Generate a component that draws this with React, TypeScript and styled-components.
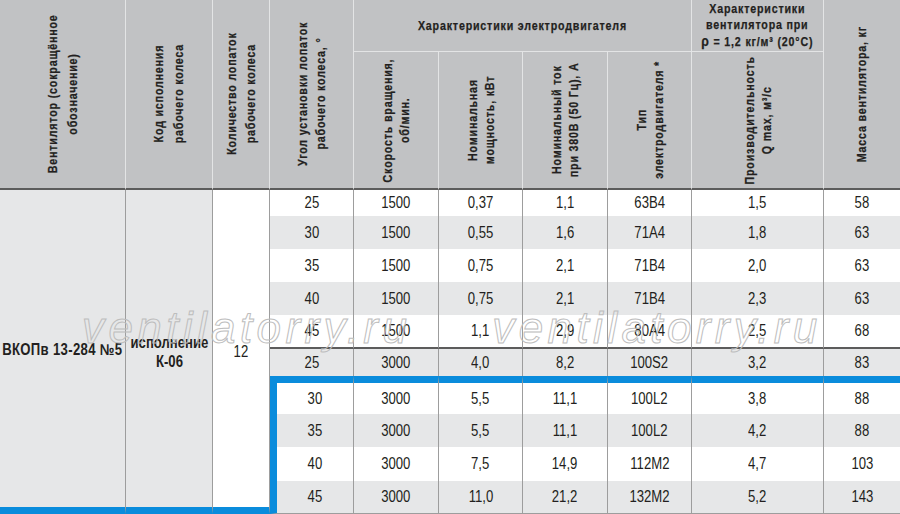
import React from "react"
import styled, { createGlobalStyle } from "styled-components"

// no condensed face is installed, so Liberation Sans is narrowed along the line direction
const FONT = `"Liberation Sans", Arial, sans-serif`
const NARROW = 0.82
const BLUE = "#0a8cdc"
const COLUMNS = [126, 87, 57, 84, 85, 84, 85, 84, 132, 76]
const ROW_HEIGHTS = [26, 33, 33, 33, 34, 27, 38, 33, 34, 33]

const GlobalStyle = createGlobalStyle`
  html, body {
    margin: 0;
    padding: 0;
    background: #fff;
  }
`

type Tone = "white" | "gray"

interface Row {
  angle: string
  speed: string
  power: string
  current: string
  motor: string
  flow: string
  mass: string
}

const rows: Row[] = [
  { angle: "25", speed: "1500", power: "0,37", current: "1,1", motor: "63B4", flow: "1,5", mass: "58" },
  { angle: "30", speed: "1500", power: "0,55", current: "1,6", motor: "71A4", flow: "1,8", mass: "63" },
  { angle: "35", speed: "1500", power: "0,75", current: "2,1", motor: "71B4", flow: "2,0", mass: "63" },
  { angle: "40", speed: "1500", power: "0,75", current: "2,1", motor: "71B4", flow: "2,3", mass: "63" },
  { angle: "45", speed: "1500", power: "1,1", current: "2,9", motor: "80A4", flow: "2,5", mass: "68" },
  { angle: "25", speed: "3000", power: "4,0", current: "8,2", motor: "100S2", flow: "3,2", mass: "83" },
  { angle: "30", speed: "3000", power: "5,5", current: "11,1", motor: "100L2", flow: "3,8", mass: "88" },
  { angle: "35", speed: "3000", power: "5,5", current: "11,1", motor: "100L2", flow: "4,2", mass: "88" },
  { angle: "40", speed: "3000", power: "7,5", current: "14,9", motor: "112M2", flow: "4,7", mass: "103" },
  { angle: "45", speed: "3000", power: "11,0", current: "21,2", motor: "132M2", flow: "5,2", mass: "143" }
]

// a dark rule closes the 1500 rpm block; the 3000 rpm tail is framed in blue
const SPLIT_AFTER = 4
const FRAME_FROM = 6

const Sheet = styled.div`
  position: relative;
  width: 900px;
  height: 514px;
  overflow: hidden;
  font-family: ${FONT};
  color: #231f20;
`

const Grid = styled.div`
  display: grid;
  grid-template-columns: ${COLUMNS.map((w) => `${w}px`).join(" ")};
  grid-template-rows: 52px 138px ${ROW_HEIGHTS.map((h) => `${h}px`).join(" ")};
`

const HeadCell = styled.div<{ $col: number; $row: number; $colSpan?: number; $rowSpan?: number; $group?: boolean }>`
  grid-column: ${(p) => p.$col} / span ${(p) => p.$colSpan ?? 1};
  grid-row: ${(p) => p.$row} / span ${(p) => p.$rowSpan ?? 1};
  box-sizing: border-box;
  display: flex;
  align-items: center;
  justify-content: center;
  background: #c1c2c4;
  border-right: ${(p) => (p.$col + (p.$colSpan ?? 1) > COLUMNS.length ? "none" : "1px solid #e3e4e5")};
  border-bottom: ${(p) => (p.$group ? "1px solid #e3e4e5" : "2px solid #5c5c5c")};
  font-weight: bold;
  font-size: 13px;
  letter-spacing: 1px;
  -webkit-text-stroke: 0.25px #231f20;
`

const GroupTitle = styled.div`
  text-align: center;
  line-height: 16px;
  white-space: nowrap;
  transform: scaleX(${NARROW});
`

const Rho = styled.span`
  font-size: 15px;
`

const VerticalLabel = styled.div<{ $lh: number }>`
  writing-mode: vertical-rl;
  transform: rotate(180deg) scaleY(${NARROW});
  white-space: nowrap;
  text-align: center;
  line-height: ${(p) => p.$lh}px;
`

const MergedCell = styled.div<{ $col: number; $tone: Tone; $bold?: boolean; $shift: number }>`
  grid-column: ${(p) => p.$col};
  grid-row: 3 / span ${ROW_HEIGHTS.length};
  box-sizing: border-box;
  display: flex;
  align-items: center;
  justify-content: center;
  background: ${(p) => (p.$tone === "gray" ? "#e6e7e8" : "#fff")};
  border-right: 1px solid #9d9d9d;
  border-bottom: 7px solid ${BLUE};
  padding-top: ${(p) => p.$shift}px;
  font-size: 16px;
  font-weight: ${(p) => (p.$bold ? "bold" : "normal")};
  line-height: 19px;
`

const Narrow = styled.span<{ $spacing?: number }>`
  display: inline-block;
  transform: scaleX(${NARROW});
  white-space: nowrap;
  text-align: center;
  letter-spacing: ${(p) => p.$spacing ?? 0}px;
`

const DataCell = styled.div<{ $tone: Tone; $last: boolean; $split: boolean; $frameTop: boolean; $frameLeft: boolean; $bottom: boolean }>`
  box-sizing: border-box;
  display: flex;
  align-items: center;
  justify-content: center;
  background: ${(p) => (p.$tone === "gray" ? "#e6e7e8" : "#fff")};
  border-right: ${(p) => (p.$last ? "none" : "1px solid #9d9d9d")};
  border-top: ${(p) => (p.$frameTop ? `7px solid ${BLUE}` : "none")};
  border-left: ${(p) => (p.$frameLeft ? `7px solid ${BLUE}` : "none")};
  border-bottom: ${(p) => (p.$split ? "2px solid #5c5c5c" : p.$bottom ? "1px solid #9d9d9d" : "none")};
  font-size: 16px;
`

const Watermark = styled.div`
  position: absolute;
  left: 0;
  right: 0;
  top: 303px;
  display: flex;
  gap: 81px;
  padding-left: 82px;
  pointer-events: none;
`

const WatermarkText = styled.span`
  font-style: italic;
  font-size: 44px;
  letter-spacing: 4.4px;
  color: transparent;
  -webkit-text-stroke: 1px #bdbdbd;
  white-space: nowrap;
`

const headLabels: { col: number; lines: string[]; lh: number }[] = [
  { col: 1, lines: ["Вентилятор (сокращённое", "обозначение)"], lh: 20 },
  { col: 2, lines: ["Код исполнения", "рабочего колеса"], lh: 20 },
  { col: 3, lines: ["Количество лопаток", "рабочего колеса"], lh: 19 },
  { col: 4, lines: ["Угол установки лопаток", "рабочего колеса, °"], lh: 18 }
]

const subLabels: { col: number; lines: string[] }[] = [
  { col: 5, lines: ["Скорость вращения,", "об/мин."] },
  { col: 6, lines: ["Номинальная", "мощность, кВт"] },
  { col: 7, lines: ["Номинальный ток", "при 380В (50 Гц), А"] },
  { col: 8, lines: ["Тип", "электродвигателя *"] },
  { col: 9, lines: ["Производительность", "Q max, м³/с"] }
]

const renderLines = (lines: string[]) =>
  lines.map((line, i) => (
    <React.Fragment key={i}>
      {i > 0 && <br />}
      {line}
    </React.Fragment>
  ))

export default function App() {
  return (
    <Sheet>
      <GlobalStyle />
      <Grid>
        {headLabels.map((h) => (
          <HeadCell key={h.col} $col={h.col} $row={1} $rowSpan={2}>
            <VerticalLabel $lh={h.lh}>{renderLines(h.lines)}</VerticalLabel>
          </HeadCell>
        ))}
        <HeadCell $col={5} $row={1} $colSpan={4} $group>
          <GroupTitle>Характеристики электродвигателя</GroupTitle>
        </HeadCell>
        <HeadCell $col={9} $row={1} $group>
          <GroupTitle>
            Характеристики
            <br />
            вентилятора при
            <br />
            <Rho>ρ</Rho> = 1,2 кг/м³ (20°С)
          </GroupTitle>
        </HeadCell>
        <HeadCell $col={10} $row={1} $rowSpan={2}>
          <VerticalLabel $lh={18}>Масса вентилятора, кг</VerticalLabel>
        </HeadCell>
        {subLabels.map((s) => (
          <HeadCell key={s.col} $col={s.col} $row={2}>
            <VerticalLabel $lh={17}>{renderLines(s.lines)}</VerticalLabel>
          </HeadCell>
        ))}

        <MergedCell $col={1} $tone="gray" $bold $shift={2}>
          <Narrow $spacing={0.4}>ВКОПв 13-284 №5</Narrow>
        </MergedCell>
        <MergedCell $col={2} $tone="gray" $bold $shift={6}>
          <Narrow>
            исполнение
            <br />
            К-06
          </Narrow>
        </MergedCell>
        <MergedCell $col={3} $tone="white" $shift={6}>
          <Narrow>12</Narrow>
        </MergedCell>

        {rows.map((r, i) => {
          const tone: Tone = i % 2 === 0 ? "white" : "gray"
          const values = [r.angle, r.speed, r.power, r.current, r.motor, r.flow, r.mass]
          return values.map((v, j) => (
            <DataCell
              key={`${i}-${j}`}
              style={{ gridColumn: j + 4, gridRow: i + 3 }}
              $tone={tone}
              $last={j === values.length - 1}
              $split={i === SPLIT_AFTER}
              $frameTop={i === FRAME_FROM}
              $frameLeft={j === 0 && i >= FRAME_FROM}
              $bottom={i === rows.length - 1}
            >
              <Narrow>{v}</Narrow>
            </DataCell>
          ))
        })}
      </Grid>
      <Watermark>
        <WatermarkText>ventilatorry.ru</WatermarkText>
        <WatermarkText>ventilatorry.ru</WatermarkText>
      </Watermark>
    </Sheet>
  )
}
